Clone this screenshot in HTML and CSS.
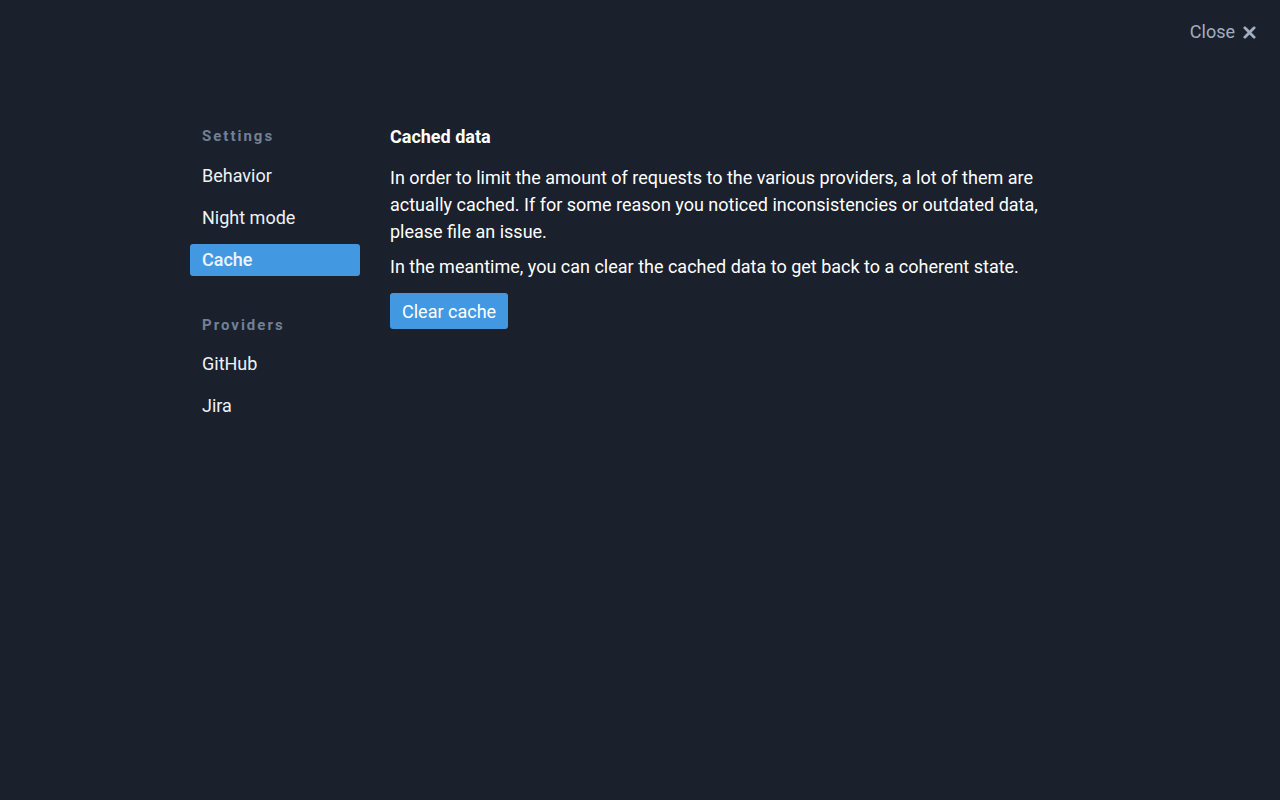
FILE: index.html
```html
<!DOCTYPE html>
<html>
<head>
<meta charset="utf-8">
<link rel="stylesheet" href="styles.css">
</head>
<body>
<div class="topbar">
  <a class="close">Close
    <svg class="close-icon" viewBox="0 0 14 14" width="13" height="13"><path d="M2 2 L12 12 M12 2 L2 12" stroke="currentColor" stroke-width="3" stroke-linecap="round"/></svg>
  </a>
</div>
<div class="container">
  <nav class="sidebar">
    <div class="nav-header">Settings</div>
    <div class="nav-item">Behavior</div>
    <div class="nav-item">Night mode</div>
    <div class="nav-item active">Cache</div>
    <div class="nav-header second">Providers</div>
    <div class="nav-item">GitHub</div>
    <div class="nav-item">Jira</div>
  </nav>
  <main class="content">
    <h2 class="title">Cached data</h2>
    <p class="para">In order to limit the amount of requests to the various providers, a lot of them are actually cached. If for some reason you noticed inconsistencies or outdated data, please file an issue.</p>
    <p class="para">In the meantime, you can clear the cached data to get back to a coherent state.</p>
    <div><button class="btn">Clear cache</button></div>
  </main>
</div>
</body>
</html>
```
FILE: styles.css
```css
html, body {
  margin: 0;
  padding: 0;
  background: #1a202c;
  font-family: Roboto, "Liberation Sans", sans-serif;
  color: #ffffff;
  height: 100%;
}
.topbar {
  display: flex;
  justify-content: flex-end;
  padding: 4px 24px 0 0;
  height: 56px;
}
.close {
  display: flex;
  align-items: center;
  gap: 8px;
  color: #a0aec0;
  font-size: 18px;
  line-height: 24px;
  cursor: pointer;
}
.close-icon { display: block; }
.container {
  width: 900px;
  margin: 0 auto;
  display: flex;
  gap: 30px;
  padding-top: 65px;
}
.sidebar {
  width: 170px;
  flex: none;
  display: flex;
  flex-direction: column;
}
.nav-header {
  font-size: 15px;
  font-weight: 700;
  letter-spacing: 2px;
  color: #718096;
  line-height: 22px;
  padding-left: 12px;
  margin-bottom: 13px;
}
.nav-header.second {
  margin-top: 28px;
  margin-bottom: 12px;
}
.nav-item {
  font-size: 18px;
  line-height: 32px;
  height: 32px;
  padding-left: 12px;
  border-radius: 3px;
  color: #edf2f7;
  margin-bottom: 10px;
}
.nav-item.active {
  background: #4299e1;
  color: #ebf4ff;
  font-weight: 500;
}
.content {
  flex: 1;
  display: flex;
  flex-direction: column;
}
.title {
  font-size: 18px;
  font-weight: 700;
  line-height: 27px;
  margin: -2px 0 14px;
}
.para {
  font-size: 18px;
  line-height: 27px;
  margin: 0 0 8px;
}
.para + .para { margin-bottom: 13px; }
.btn {
  background: #4299e1;
  color: #fff;
  border: none;
  border-radius: 3px;
  font-family: inherit;
  font-size: 18px;
  height: 36px;
  padding: 0 12px;
}
```
